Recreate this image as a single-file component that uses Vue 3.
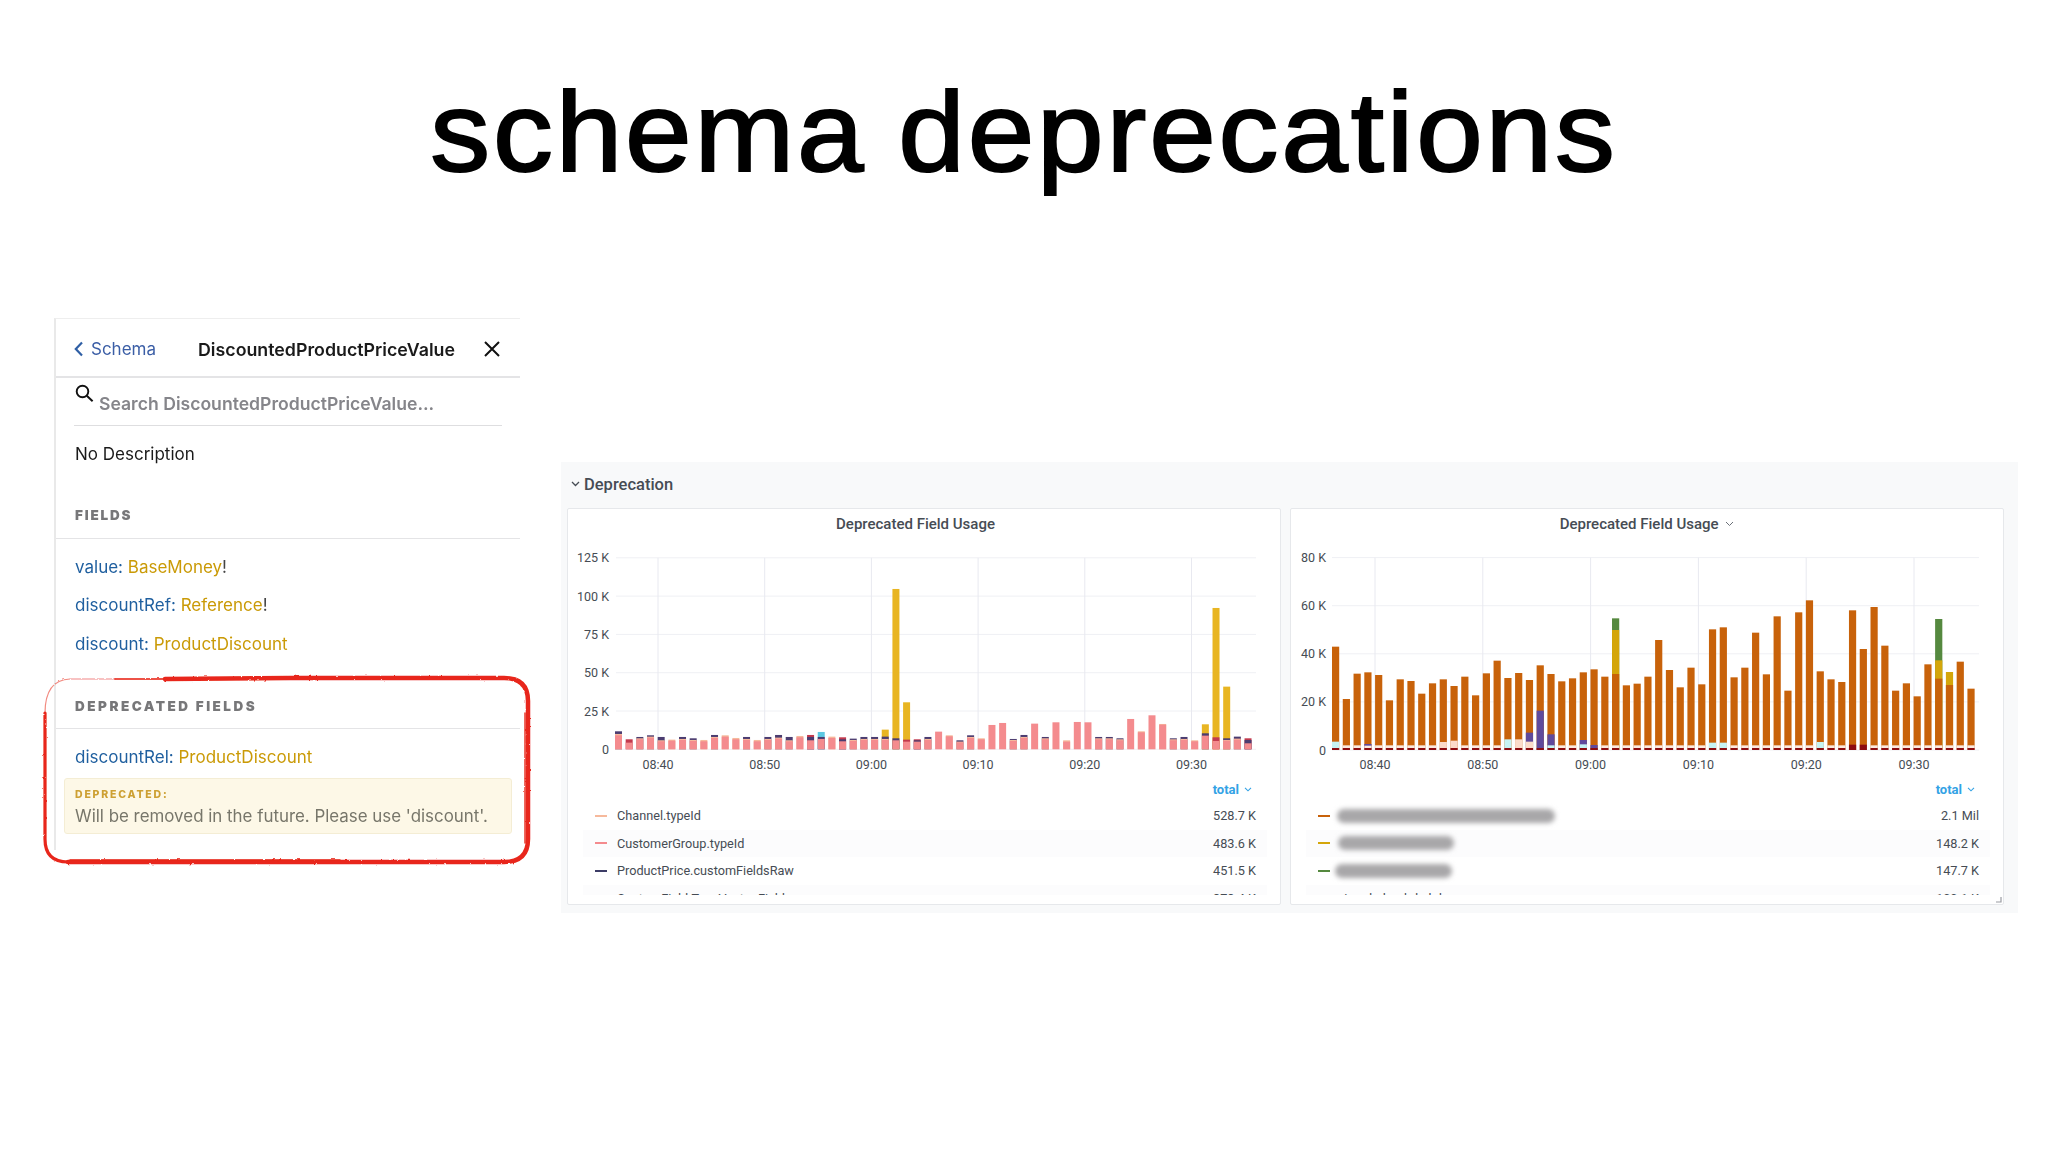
<script setup>
const palette = {
  P: '#f48b8e', A: '#f6b99c', D: '#4b3c70', R: '#c23a4e', Y: '#e8b522', C: '#5cc8e2',
  O: '#c8620a', X: '#8c0c10', W: '#fbeadf', L: '#c6f3f3', F: '#fbdccb', V: '#5f4a9c', G: '#55893f', U: '#d4a60a'
}

// 每根柱子：颜色字母 + 顶部位置，高的先画，矮的盖在上面
const usageA = [
  'D514 A522 P526', 'R538 P548', 'D531 A535 P538', 'D526 A530 P533', 'D531 A541 P544', 'A539 P542',
  'D531 A537 P540', 'D535 A540 P543', 'A540 P544', 'D525 A531 P534', 'A526 P530', 'A534 P538',
  'D531 A537 P540', 'A540 P544', 'D531 A537 P540', 'D525 A533 P536', 'D531 A541 P544', 'A528 P532',
  'R525 D531 P541', 'C516 D531 P537', 'A530 P534', 'R532 D538 P544', 'D536 A540 P543', 'D531 A537 P540',
  'D531 A537 P540', 'Y509 D530 A537 P540', 'Y87 D535 P541', 'Y427 R539 P545', 'R538 D541 P545', 'D531 A537 P540',
  'P515', 'A526 P529', 'D541 A545 P547', 'D526 A531 P534', 'A535 P538', 'P495',
  'P489', 'D537 A540 P543', 'D525 A531 P534', 'P491', 'D531 A535 P538', 'P487',
  'A541 P545', 'P486', 'P487', 'D531 A535 P538', 'D531 A535 P538', 'D535 A538 P541',
  'P477', 'A514 P517', 'P466', 'A492 P494', 'D535 A538 P541', 'D531 A537 P540',
  'A541 P544', 'Y493 D520 P527', 'Y144 R532 P543', 'Y380 D535 A540 P542', 'D530 A536 P539', 'R535 D540 P550'
]

const orangeTops = [
  170, 327, 251, 247, 255, 331, 268, 273, 311, 280, 268, 288, 260, 316, 250, 212, 264, 249, 270, 226,
  252, 274, 265, 247, 238, 260, 252, 286, 281, 260, 150, 240, 292, 233, 283, 118, 112, 262, 233, 128,
  253, 79, 302, 67, 31, 244, 268, 276, 61, 177, 51, 167, 302, 280, 319, 223, 266, 285, 215, 296
]
const above = { 26: 'G85 U120', 56: 'G87 U211', 57: 'U246' }
const below = {
  0: 'L455', 3: 'V462 W467', 10: 'F456', 11: 'F452', 16: 'L448', 17: 'F448', 18: 'V428 F455',
  19: 'V362', 20: 'V433 L466', 23: 'V450 L463', 24: 'V465', 35: 'L458', 36: 'L458', 45: 'L456'
}
const usageB = orangeTops.map((top, i) =>
  [above[i], 'O' + top, below[i] || 'W466', i === 48 || i === 49 ? 'X464' : 'X474'].filter(Boolean).join(' ')
)

function buildBars(list, x0, step, base, zero) {
  return list.flatMap((s, i) =>
    s.split(' ').map((t) => ({
      x: x0 + step * i,
      y: zero - (base - Number(t.slice(1))) / 3,
      h: (base - Number(t.slice(1))) / 3,
      fill: palette[t[0]]
    }))
  )
}

const times = ['08:40', '08:50', '09:00', '09:10', '09:20', '09:30']

const panels = [
  {
    title: 'Deprecated Field Usage',
    menu: false,
    left: 48, right: 688, labelX: 41, zero: 208.3, stepY: 38.3,
    ticks: ['0', '25 K', '50 K', '75 K', '100 K', '125 K'],
    vx: 90, vstep: 106.7,
    bars: buildBars(usageA, 47, 10.67, 568, 208.3),
    barW: 7,
    rows: [
      { color: '#f6b99c', name: 'Channel.typeId', value: '528.7 K' },
      { color: '#f48b8e', name: 'CustomerGroup.typeId', value: '483.6 K' },
      { color: '#3c3c66', name: 'ProductPrice.customFieldsRaw', value: '451.5 K' },
      { color: '#c23a4e', name: 'CustomField.TypeVector.Field', value: '378.4 K' }
    ]
  },
  {
    title: 'Deprecated Field Usage',
    menu: true,
    left: 41, right: 688, labelX: 35, zero: 209, stepY: 48.1,
    ticks: ['0', '20 K', '40 K', '60 K', '80 K'],
    vx: 84, vstep: 107.8,
    bars: buildBars(usageB, 41, 10.77, 480, 209),
    barW: 7.2,
    rows: [
      { color: '#c8620a', blob: 218, shift: -3, value: '2.1 Mil' },
      { color: '#d4a60a', blob: 116, shift: -2, value: '148.2 K' },
      { color: '#55893f', blob: 117, shift: -5, value: '147.7 K' },
      { color: '#c6f3f3', name: 'ricardo.lambda.kd', value: '100.1 K' }
    ]
  }
]
</script>

<template>
  <div class="slide">
    <h1 class="headline">schema deprecations</h1>

    <div class="content">
      <!-- 左侧 GraphiQL 文档面板 -->
      <section class="doc">
        <header class="doc-head">
          <svg class="back" width="9" height="16" viewBox="0 0 9 16"><path d="M8 1.5 1.8 8 8 14.5" fill="none" stroke="#2f5fa5" stroke-width="2.2" /></svg>
          <span class="back-label">Schema</span>
          <strong class="doc-title">DiscountedProductPriceValue</strong>
          <svg class="close" width="16" height="16" viewBox="0 0 16 16"><path d="M1 1 15 15M15 1 1 15" stroke="#111" stroke-width="2" /></svg>
        </header>

        <div class="search">
          <svg class="search-icon" width="19" height="19" viewBox="0 0 19 19"><circle cx="7.5" cy="7.5" r="5.8" fill="none" stroke="#111" stroke-width="1.9" /><path d="m11.8 11.8 5.8 5.4" stroke="#111" stroke-width="2" /></svg>
          <span class="search-text">Search DiscountedProductPriceValue...</span>
        </div>

        <p class="description">No Description</p>

        <h2 class="group group-fields">FIELDS</h2>
        <p class="field first"><span class="fname">value: </span><span class="ftype">BaseMoney</span>!</p>
        <p class="field"><span class="fname">discountRef: </span><span class="ftype">Reference</span>!</p>
        <p class="field"><span class="fname">discount: </span><span class="ftype">ProductDiscount</span></p>

        <h2 class="group group-dep">DEPRECATED FIELDS</h2>
        <p class="field first"><span class="fname">discountRel: </span><span class="ftype">ProductDiscount</span></p>
        <div class="notice">
          <div class="notice-label">DEPRECATED:</div>
          <div class="notice-text">Will be removed in the future. Please use 'discount'.</div>
        </div>

        <!-- 手绘红框，盖在内容上 -->
        <svg class="scribble" width="500" height="200" viewBox="0 0 500 200">
          <defs>
            <filter id="rough" x="-5%" y="-5%" width="110%" height="110%">
              <feTurbulence type="fractalNoise" baseFrequency="0.25" numOctaves="2" seed="4" />
              <feDisplacementMap in="SourceGraphic" scale="2.2" />
            </filter>
          </defs>
          <g fill="none" stroke="#e8281a" stroke-linecap="round" filter="url(#rough)">
            <path d="M5 40Q5 7 30 6H75" stroke-width="1.2" opacity=".55" />
            <path d="M75 6H130" stroke-width="1.8" opacity=".8" />
            <path d="M125 6 250 5H464Q488 5 488 28V166Q488 189 464 189H28" stroke-width="4.5" />
            <path d="M28 189Q5 189 5 166V40" stroke-width="3.2" />
            <path d="M30 187H300M485 40V170" stroke-width="1.4" />
          </g>
        </svg>
      </section>

      <!-- 右侧 Grafana 行 -->
      <section class="dash">
        <div class="dash-head">
          <svg width="9" height="6" viewBox="0 0 9 6"><path d="M1 1 4.5 4.5 8 1" fill="none" stroke="#464c54" stroke-width="1.3" /></svg>
          <span>Deprecation</span>
        </div>
        <div class="panels">
          <article v-for="(p, n) in panels" :key="n" class="panel">
            <div class="panel-title" :class="{ 'panel-title--plain': !p.menu }">
              {{ p.title }}
              <svg v-if="p.menu" width="9" height="6" viewBox="0 0 9 6"><path d="M1 1 4.5 4.5 8 1" fill="none" stroke="#6b7078" stroke-width="1" /></svg>
            </div>
            <svg class="chart" width="712" height="235" viewBox="0 0 712 235">
              <line v-for="(t, i) in p.ticks" :key="'h' + i" :x1="p.left" :x2="p.right" :y1="p.zero - p.stepY * i" :y2="p.zero - p.stepY * i" stroke="#eff0f4" />
              <line v-for="(t, i) in times" :key="'v' + i" :x1="p.vx + p.vstep * i" :x2="p.vx + p.vstep * i" :y1="p.zero - p.stepY * (p.ticks.length - 1)" :y2="p.zero" stroke="#e8e9f0" />
              <rect v-for="(b, i) in p.bars" :key="'b' + i" :x="b.x" :y="b.y" :width="p.barW" :height="b.h" :fill="b.fill" />
              <text v-for="(t, i) in p.ticks" :key="'l' + i" :x="p.labelX" :y="p.zero - p.stepY * i + 4.5" text-anchor="end">{{ t }}</text>
              <text v-for="(t, i) in times" :key="'t' + i" :x="p.vx + p.vstep * i" y="227.5" text-anchor="middle">{{ t }}</text>
            </svg>
            <div class="legend">
              <div class="legend-sort">
                total
                <svg width="8" height="5" viewBox="0 0 8 5"><path d="M1 .8 4 3.8 7 .8" fill="none" stroke="#33a2e5" stroke-width="1.1" /></svg>
              </div>
              <div v-for="r in p.rows" :key="r.value" class="legend-row">
                <i class="dash-mark" :style="{ background: r.color }"></i>
                <span v-if="r.blob" class="blob" :style="{ width: r.blob + 'px', marginLeft: r.shift + 'px' }"></span>
                <span v-else class="legend-name">{{ r.name }}</span>
                <span class="legend-value">{{ r.value }}</span>
              </div>
            </div>
            <svg v-if="p.menu" class="resize" width="7" height="7" viewBox="0 0 7 7"><path d="M6 1V6H1" fill="none" stroke="#9a9ca2" stroke-width="1.2" /></svg>
          </article>
        </div>
      </section>
    </div>
  </div>
</template>

<style scoped>
.slide {
  width: 2048px;
  height: 1152px;
  background: #fff;
  overflow: hidden;
}
.headline {
  margin: 0;
  padding-top: 62px;
  height: 262px;
  box-sizing: border-box;
  text-align: center;
  font: 400 114px/140px "Liberation Sans", Arial, sans-serif;
  letter-spacing: 2.7px;
  word-spacing: -4px;
  -webkit-text-stroke: 2px #000;
  color: #000;
  transform: scaleX(1.05);
}
.content {
  display: flex;
  align-items: flex-start;
  padding-left: 54px;
  margin-top: 56px;
  filter: blur(0.35px);
}

/* ===== 文档面板 ===== */
.doc {
  position: relative;
  width: 466px;
  height: 532px;
  box-sizing: border-box;
  border-left: 2px solid #e9e9e9;
  border-top: 1px solid #eeeeee;
  font-family: Inter, "Noto Sans", sans-serif;
  font-size: 17px;
  color: #1a1a1a;
}
.doc-head {
  display: flex;
  align-items: center;
  height: 59px;
  box-sizing: border-box;
  border-bottom: 2px solid #e4e4e6;
  padding: 3px 0 0 18px;
}
.back-label {
  margin-left: 8px;
  color: #3b5ea6;
  font-size: 17px;
}
.doc-title {
  margin-left: 42px;
  font-size: 17.8px;
  font-weight: 600;
  white-space: nowrap;
}
.close {
  margin-left: 29px;
}
.search {
  position: relative;
  width: 428px;
  height: 48px;
  margin-left: 18px;
  border-bottom: 1px solid #dedee0;
  box-sizing: border-box;
}
.search-icon {
  position: absolute;
  left: 1px;
  top: 6px;
}
.search-text {
  position: absolute;
  left: 25px;
  top: 15px;
  line-height: 22px;
  font-weight: 600;
  font-size: 17.6px;
  color: #85858a;
  white-space: nowrap;
}
.description {
  margin: 17px 0 0 19px;
  line-height: 22px;
}
.group {
  margin: 0;
  padding-left: 19px;
  border-bottom: 1px solid #e4e4e6;
  font-size: 13.5px;
  line-height: 16px;
  font-weight: 900;
  letter-spacing: 1.8px;
  color: #777779;
}
.group-fields {
  margin-top: 42px;
  padding-bottom: 15px;
}
.group-dep {
  margin-top: 43.5px;
  padding-bottom: 14px;
  letter-spacing: 2.5px;
}
.field {
  margin: 16.5px 0 0 19px;
  line-height: 22px;
  color: #444;
}
.fname {
  color: #1f5f9f;
}
.ftype {
  color: #ca9a06;
}
.notice {
  width: 448px;
  height: 56px;
  box-sizing: border-box;
  margin: 10px 0 0 8px;
  padding: 9px 10px 0;
  background: #fdf8e7;
  border: 1px solid #f4edd4;
  border-radius: 3px;
}
.notice-label {
  font-size: 10.5px;
  line-height: 14px;
  font-weight: 800;
  letter-spacing: 1.8px;
  color: #cda033;
}
.notice-text {
  margin-top: 3px;
  font-size: 16.9px;
  line-height: 22px;
  color: #77766a;
  white-space: nowrap;
}
.scribble {
  position: absolute;
  left: -16px;
  top: 354px;
  pointer-events: none;
}

/* ===== Grafana ===== */
.dash {
  margin-left: 41px;
  margin-top: 144px;
  width: 1457px;
  height: 451px;
  box-sizing: border-box;
  padding-left: 6px;
  background: #f8f9fa;
  font-family: Roboto, "Liberation Sans", sans-serif;
  color: #464c54;
}
.dash-head {
  display: flex;
  align-items: center;
  gap: 4px;
  height: 44px;
  margin-bottom: 2px;
  padding-left: 4px;
  font-size: 16.5px;
  font-weight: 500;
}
.panels {
  display: flex;
  gap: 9px;
}
.panel {
  position: relative;
  width: 714px;
  height: 397px;
  box-sizing: border-box;
  background: #fff;
  border: 1px solid #e6e8eb;
  border-radius: 2px;
}
.panel-title {
  height: 32px;
  line-height: 31px;
  text-align: center;
  font-size: 15px;
  font-weight: 500;
}
.panel-title--plain {
  padding-right: 17px;
}
.panel-title svg {
  margin-left: 3px;
  vertical-align: 2px;
}
.chart {
  display: block;
}
.chart text {
  font-family: Roboto, "Liberation Sans", sans-serif;
  font-size: 12.5px;
  fill: #464c54;
}
.legend {
  height: 119px;
  overflow: hidden;
  padding: 0 13px 0 15px;
  font-size: 12.7px;
}
.legend-sort {
  display: flex;
  justify-content: flex-end;
  align-items: center;
  gap: 5px;
  height: 26px;
  padding-right: 15px;
  color: #33a2e5;
  font-size: 13px;
  font-weight: 700;
}
.legend-row {
  display: flex;
  align-items: center;
  height: 27.6px;
  padding: 0 11px 0 12px;
}
.legend-row:nth-child(odd) {
  background: #fcfcfd;
}
.dash-mark {
  flex: none;
  width: 12px;
  height: 2px;
  margin-right: 10px;
}
.legend-value {
  margin-left: auto;
}
.blob {
  height: 14px;
  border-radius: 8px;
  background: #a8a7a9;
  filter: blur(2.5px);
}
.resize {
  position: absolute;
  right: 1px;
  bottom: 1px;
}
</style>
